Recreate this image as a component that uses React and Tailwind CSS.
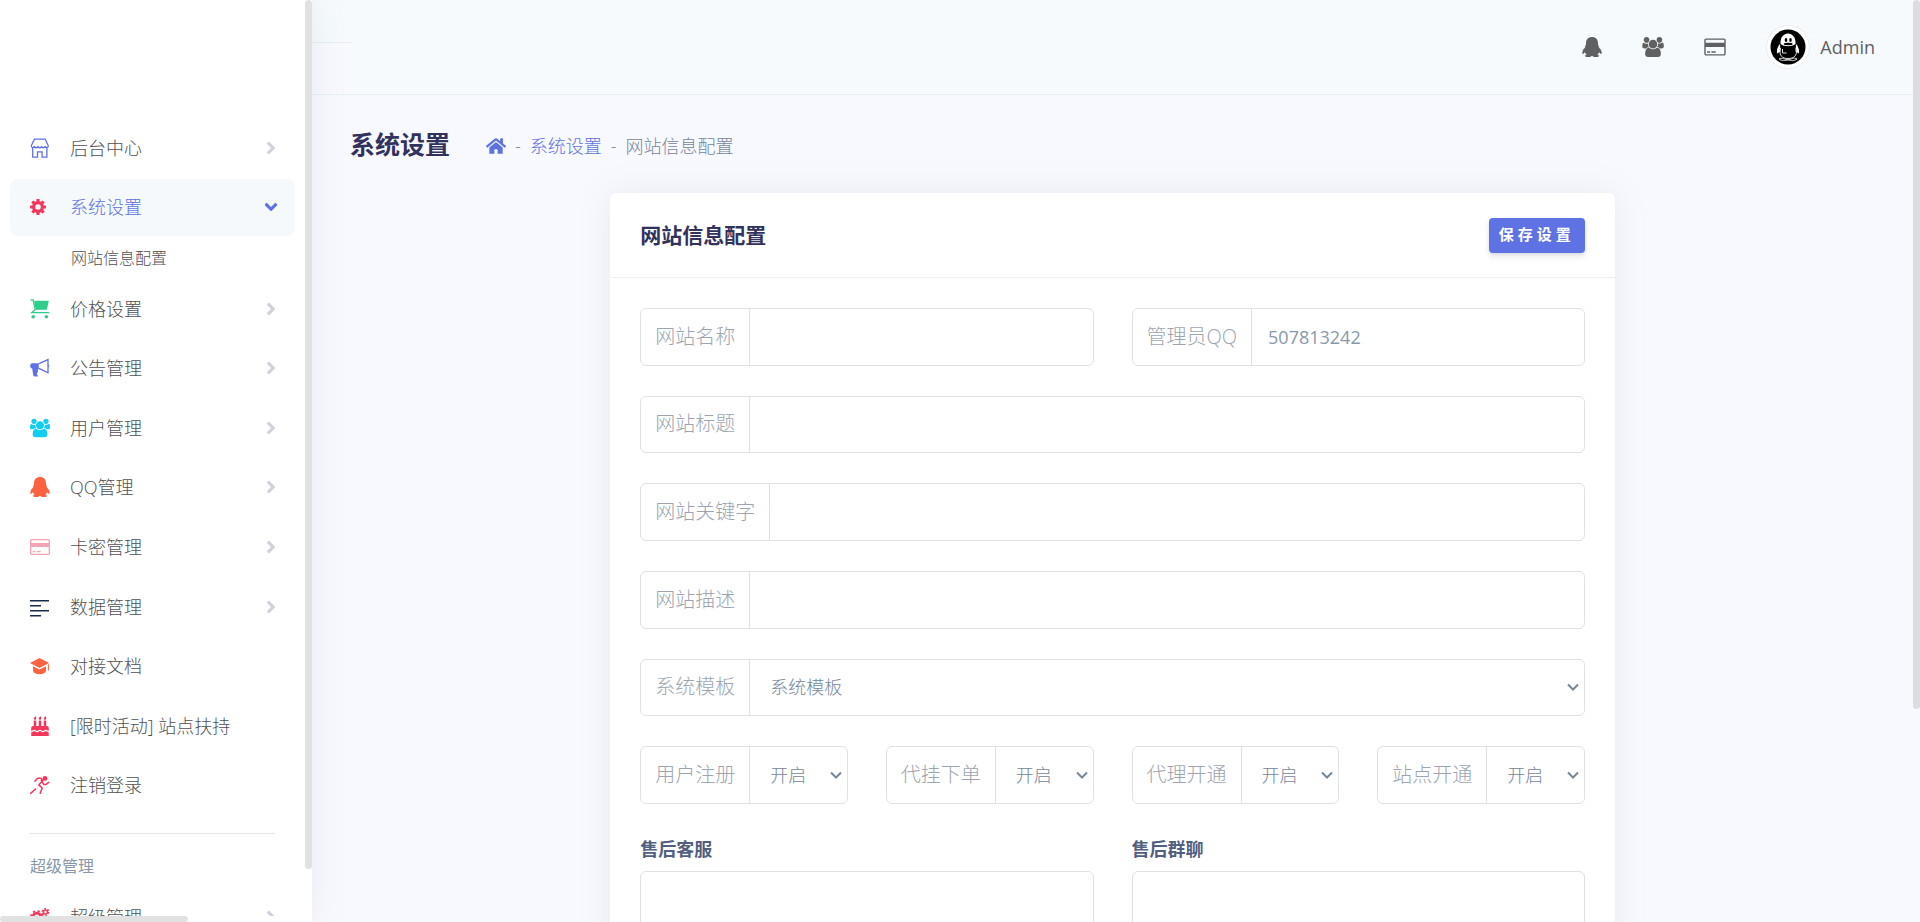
import React from "react";
import {
  FaAngleDown,
  FaAngleRight,
  FaBirthdayCake,
  FaHome,
} from "react-icons/fa";

const ShopIcon = ({ className }) => (
  <svg viewBox="0 0 20 20" fill="none" stroke="currentColor" strokeWidth="1.3" className={className}>
    <path d="M4.4 1.2h10.8l3.1 6.6c0 2.3-2.9 2.3-3.1.3-.2 2.200-3.500 2.200-3.600 0-.1 2.200-3.500 2.200-3.600 0-.1 2.200-3.400 2.200-3.600 0-.2 2-3.100 2-3.100-.3z" />
    <path d="M2.700 9.800v9.400h4.800v-5.400h4.600v5.400h4.800V9.800" />
  </svg>
);

const GearIcon = ({ className }) => (
  <svg viewBox="0 0 16 16" className={className}>
    <circle cx="8" cy="8" r="4.4" fill="none" stroke="currentColor" strokeWidth="3.2" />
    <g fill="currentColor">
      <rect x="6.4" width="3.2" height="3.4" rx="0.6" />
      <rect x="6.4" y="12.6" width="3.2" height="3.4" rx="0.6" />
      <rect y="6.4" width="3.4" height="3.2" rx="0.6" />
      <rect x="12.6" y="6.4" width="3.4" height="3.2" rx="0.6" />
      <g transform="rotate(45 8 8)">
        <rect x="6.4" width="3.2" height="3.4" rx="0.6" />
        <rect x="6.4" y="12.6" width="3.2" height="3.4" rx="0.6" />
        <rect y="6.4" width="3.4" height="3.2" rx="0.6" />
        <rect x="12.6" y="6.4" width="3.4" height="3.2" rx="0.6" />
      </g>
    </g>
  </svg>
);

const GearsIcon = ({ className }) => (
  <svg viewBox="0 0 22 20" className={className}>
    <g fill="none" stroke="currentColor">
      <circle cx="7.5" cy="10" r="4.2" strokeWidth="3" />
      <circle cx="7.5" cy="10" r="6.5" strokeWidth="2" strokeDasharray="2.6 2.5" />
      <circle cx="17" cy="4.5" r="2.2" strokeWidth="1.7" />
      <circle cx="17" cy="4.5" r="3.6" strokeWidth="1.5" strokeDasharray="1.9 1.87" />
      <circle cx="17" cy="15.5" r="2.2" strokeWidth="1.7" />
      <circle cx="17" cy="15.5" r="3.6" strokeWidth="1.5" strokeDasharray="1.9 1.87" />
    </g>
  </svg>
);

const CartIcon = ({ className }) => (
  <svg viewBox="0 0 20 20" fill="currentColor" className={className}>
    <path d="M4.2 1.8h14.6l-2 8.9H5.6z" />
    <path d="M.5.9h2.6l2.2 9.6-3.6 3.2h17.6" fill="none" stroke="currentColor" strokeWidth="1.3" />
    <circle cx="3.2" cy="17.7" r="1.8" />
    <circle cx="16.4" cy="17.7" r="1.8" />
  </svg>
);

const MegaphoneIcon = ({ className }) => (
  <svg viewBox="0 0 20 20" fill="currentColor" className={className}>
    <path d="M8.8 5.2H2.2C.8 5.2.2 6.2.2 7.8s.6 2.6 2 2.6l1 6.6c.2 1 .8 1.4 1.6 1.4h2.6c.6 0 .6-.7.2-1.1-.9-1-.9-2 0-2.9.6-.6.2-1.6.2-2.6l1-.9z" />
    <path d="M9 5.6l9-4v13.2l-9-4.4" fill="none" stroke="currentColor" strokeWidth="1.3" />
    <path d="M18.4 6.6c1.2.1 1.2 3 0 3.1z" />
  </svg>
);

const QqIcon = ({ className }) => (
  <svg viewBox="0 0 20 20" fill="currentColor" className={className}>
    <path d="M10 0C6.200 0 4 2.600 4 6v1.600c-.5.6-.9 1.500-.7 2.400C1.600 11.800.3 13.900.3 15.600c0 1 .3 1.400.7 1.300.6-.1 1.300-.9 1.900-1.900.2 1 .8 2 1.700 2.800-.9.300-1.500.7-1.500 1.200 0 1 1.800 1 3.300 1 1.600 0 2.900-.4 3.600-1.200.7.800 2 1.200 3.600 1.200 1.500 0 3.300 0 3.300-1 0-.5-.6-.9-1.500-1.200.9-.8 1.500-1.800 1.700-2.800.6 1 1.300 1.800 1.900 1.900.4.100.7-.3.7-1.300 0-1.700-1.300-3.800-3-5.600.2-.9-.2-1.800-.7-2.400V6c0-3.400-2.200-6-6-6z" />
  </svg>
);

const UsersIcon = ({ className }) => (
  <svg viewBox="0 0 1920 1792" fill="currentColor" className={className}>
    <path d="M593 896q-162 5-265 128h-134q-82 0-138-40.500t-56-118.500q0-353 124-353 6 0 43.500 21t97.500 42.500 119 21.500q67 0 133-23-5 37-5 66 0 159 92 272zm1071 637q0 120-73 189.500t-194 69.500h-874q-121 0-194-69.500t-73-189.500q0-53 3.500-103.500t14-109 26.500-108.500 43-97.500 62-81 85.500-53.500 111.500-20q10 0 43 21.500t73 48 107 48 135 21.500 135-21.500 107-48 73-48 43-21.500q61 0 111.500 20t85.500 53.500 62 81 43 97.500 26.500 108.500 14 109 3.500 103.500zm-1024-1277q0 106-75 181t-181 75-181-75-75-181 75-181 181-75 181 75 75 181zm704 384q0 159-112.500 271.500t-271.500 112.500-271.500-112.500-112.500-271.500 112.500-271.500 271.500-112.500 271.500 112.500 112.500 271.500zm576 225q0 78-56 118.500t-138 40.500h-134q-103-123-265-128 92-113 92-272 0-29-5-66 66 23 133 23 59 0 119-21.500t97.500-42.500 43.500-21q124 0 124 353zm-128-609q0 106-75 181t-181 75-181-75-75-181 75-181 181-75 181 75 75 181z" />
  </svg>
);

const CardIcon = ({ className }) => (
  <svg viewBox="0 0 1920 1792" fill="currentColor" className={className}>
    <path d="M1760 128q66 0 113 47t47 113v1216q0 66-47 113t-113 47h-1600q-66 0-113-47t-47-113v-1216q0-66 47-113t113-47h1600zm-1600 128q-13 0-22.500 9.500t-9.500 22.500v224h1664v-224q0-13-9.500-22.500t-22.500-9.500h-1600zm1600 1280q13 0 22.500-9.500t9.500-22.500v-608h-1664v608q0 13 9.500 22.500t22.500 9.500h1600zm-1504-128v-128h256v128h-256zm384 0v-128h384v128h-384z" />
  </svg>
);

const AlignLeftIcon = ({ className }) => (
  <svg viewBox="0 0 20 20" fill="currentColor" className={className}>
    <path d="M0 3h19v1.400H0zM0 8h11v1.400H0zM0 13h19v1.400H0zM0 18h11v1.400H0z" />
  </svg>
);

const HatIcon = ({ className }) => (
  <svg viewBox="0 0 20 20" fill="currentColor" className={className}>
    <path d="M9.500 2L0 7l9.500 5L19 7z" />
    <path d="M3 10.200l6.500 3.300 6.500-3.300v4.800c-1 2.200-3.500 3.300-6.500 3.300S4 17.200 3 15z" />
    <path d="M17.900 8.300h1v6.200h-1z" />
  </svg>
);

const RunIcon = ({ className }) => (
  <svg viewBox="0 0 20 20" fill="none" stroke="currentColor" className={className}>
    <circle cx="15" cy="3.400" r="2.400" fill="currentColor" stroke="none" />
    <path
      d="M4.900 6.200l2.600-3h3.300l2 2.400-4 4.300 3.400 3.100-2 5.200M11.300 5.400l2.400 4h2.400l2.600-2M.6 18.400l5-4.400"
      strokeWidth="1.500"
      strokeLinecap="round"
      strokeLinejoin="round"
    />
  </svg>
);

const Avatar = () => (
  <svg viewBox="0 0 44 44" className="w-11 h-11" role="img" aria-label="Admin">
    <circle cx="22" cy="22" r="21.500" fill="#fff" stroke="#e9ecef" />
    <circle cx="22" cy="22" r="17.500" fill="#000" />
    <path d="M14.500 19c-1-14 16-14 15 0-4 3-11 3-15 0z" fill="#fff" />
    <path d="M14 19c-2 2-3.500 5-3 9.500l3.500-2zM30 19c2 2 3.500 5 3 9.500l-3.500-2z" fill="#fff" />
    <ellipse cx="20" cy="15" rx="1.300" ry="2" />
    <ellipse cx="24.500" cy="15" rx="1.300" ry="2" />
    <ellipse cx="22.200" cy="19" rx="4.500" ry="1.200" />
    <path
      d="M14.500 23c-2 8 2 10.500 7.500 10.500s10-2.500 8-10.500M16.500 24v4h4M13 34c3-2 6 1 9 .8s6-3 9-.8c-3 2.500-6 1.500-9 .8-3 .8-6 1.500-9-.8z"
      fill="none"
      stroke="#ddd"
      strokeWidth="1"
    />
  </svg>
);

const topLinks = [
  { label: "后台中心", icon: ShopIcon, color: "text-[#5e72e4]" },
  { label: "系统设置", icon: GearIcon, color: "text-[#f5365c]", active: true },
];

const navLinks = [
  { label: "价格设置", icon: CartIcon, color: "text-[#2dce89]" },
  { label: "公告管理", icon: MegaphoneIcon, color: "text-[#5e72e4]" },
  { label: "用户管理", icon: UsersIcon, color: "text-[#11cdef]" },
  { label: "QQ管理", icon: QqIcon, color: "text-[#fb6340]" },
  { label: "卡密管理", icon: CardIcon, color: "text-[#f3a4b5]" },
  { label: "数据管理", icon: AlignLeftIcon, color: "text-[#172b4d]" },
  { label: "对接文档", icon: HatIcon, color: "text-[#fb6340]", leaf: true },
  { label: "[限时活动] 站点扶持", icon: FaBirthdayCake, color: "text-[#f5365c]", leaf: true },
  { label: "注销登录", icon: RunIcon, color: "text-[#f5365c]", leaf: true },
];

const switches = ["用户注册", "代挂下单", "代理开通", "站点开通"];

function NavItem({ item }) {
  const Icon = item.icon;
  return (
    <li className="flex items-center pl-[10px] pr-[17px]">
      <a
        href="#"
        className={`flex items-center w-full h-[57px] pl-5 pr-[14px] rounded-lg ${
          item.active ? "bg-[#f6f9fc] text-[#5e72e4]" : "text-[#505153]"
        }`}
      >
        <span className={`flex w-10 ${item.color}`}>
          <Icon className={item.active ? "w-4 h-4" : "w-5 h-5"} />
        </span>
        <span className="flex-1 whitespace-nowrap">{item.label}</span>
        {item.active && <FaAngleDown className="w-5 h-5" />}
        {!item.active && !item.leaf && (
          <FaAngleRight className="w-5 h-5 text-[#ced4da]" />
        )}
      </a>
    </li>
  );
}

function Field({ id, label, value = "" }) {
  return (
    <div className="flex min-w-0 border border-[#dee2e6] rounded-md">
      <label
        htmlFor={id}
        className="flex items-center px-[14px] border-r border-[#dee2e6] text-xl text-[#9ca5af] whitespace-nowrap"
      >
        {label}
      </label>
      <input
        id={id}
        type="text"
        defaultValue={value}
        className="flex-1 min-w-0 px-4 font-normal text-[#8898aa] rounded-md outline-none"
      />
    </div>
  );
}

function SelectField({ id, label, options }) {
  return (
    <div className="flex min-w-0 border border-[#dee2e6] rounded-md">
      <label
        htmlFor={id}
        className="flex items-center px-[14px] border-r border-[#dee2e6] text-xl text-[#9ca5af] whitespace-nowrap"
      >
        {label}
      </label>
      <div className="relative flex flex-1 min-w-0 text-[#75869a]">
        <select
          id={id}
          className="flex-1 min-w-0 pl-5 pr-6 appearance-none bg-transparent outline-none"
        >
          {options.map((option) => (
            <option key={option}>{option}</option>
          ))}
        </select>
        <svg
          viewBox="0 0 12 8"
          fill="none"
          stroke="currentColor"
          strokeWidth="2"
          className="absolute right-[5px] top-1/2 -translate-y-1/2 w-3 h-2 pointer-events-none"
        >
          <path d="M1 1.500l5 5 5-5" />
        </svg>
      </div>
    </div>
  );
}

function Sidebar() {
  return (
    <aside className="relative w-[312px] h-full overflow-hidden bg-white">
      <nav className="pt-[118px]">
        <ul className="grid auto-rows-fr h-[119px]">
          {topLinks.map((item) => (
            <NavItem key={item.label} item={item} />
          ))}
        </ul>
        <a href="#" className="flex items-center h-[42px] pl-[71px] text-base text-[#505153]">
          网站信息配置
        </a>
        <ul className="grid auto-rows-fr h-[536px]">
          {navLinks.map((item) => (
            <NavItem key={item.label} item={item} />
          ))}
        </ul>
        <hr className="mt-[18px] ml-[30px] mr-[37px] border-[#e5e5e5]" />
        <h6 className="pt-5 pb-[10px] pl-[30px] text-base leading-6 font-normal text-[#8898aa]">
          超级管理
        </h6>
        <ul>
          <NavItem item={{ label: "超级管理", icon: GearsIcon, color: "text-[#f5365c]" }} />
        </ul>
      </nav>
      <div className="absolute top-0 right-0 w-[7px] h-[869px] rounded-full bg-[#e1e1e1]"></div>
      <div className="absolute bottom-0 left-0 w-full h-[6px] bg-white">
        <div className="w-[188px] h-full rounded-full bg-[#e1e1e1]"></div>
      </div>
    </aside>
  );
}

function Header() {
  return (
    <header className="flex h-[95px] border-b border-[#e9eef3]">
      <div className="w-10 h-[43px] bg-[#f6fafd] border-b border-[#e9eef3]"></div>
      <div className="flex flex-1 items-center justify-end pr-[38px] bg-[#f6fafd] text-[#5f6062]">
        <a href="#" aria-label="QQ" className="mr-10">
          <QqIcon className="w-5 h-5" />
        </a>
        <a href="#" aria-label="用户管理" className="mr-10">
          <UsersIcon className="w-[22px] h-5" />
        </a>
        <a href="#" aria-label="卡密管理" className="mr-10">
          <CardIcon className="w-[22px] h-5" />
        </a>
        <a href="#" className="flex items-center gap-[10px] font-normal">
          <Avatar />
          Admin
        </a>
      </div>
    </header>
  );
}

export default function App() {
  return (
    <div className="flex h-screen overflow-hidden bg-[#f8f9fe] text-lg font-light font-['Open_Sans','Noto_Sans_CJK_SC',sans-serif]">
      <div className="relative z-10 shrink-0 shadow-[0_0_32px_rgba(136,152,170,0.15)]">
        <Sidebar />
      </div>
      <main className="flex-1 min-w-0">
        <Header />
        <div className="flex items-center h-[98px] px-[38px]">
          <h1 className="text-[25px] font-semibold text-[#32325d]">系统设置</h1>
          <nav className="flex items-center gap-[9px] pt-1 ml-9 text-[#75869a]">
            <a href="#" aria-label="首页" className="text-[#5e72e4]">
              <FaHome className="w-5 h-5" />
            </a>
            <span>-</span>
            <a href="#" className="text-[#5e72e4]">系统设置</a>
            <span>-</span>
            <span>网站信息配置</span>
          </nav>
        </div>
        <div className="flex justify-center px-[17px]">
          <div className="w-2/3 px-5">
            <form className="rounded-md bg-white shadow-[0_0_32px_rgba(136,152,170,0.15)]">
              <div className="flex items-center justify-between h-[85px] px-[30px] border-b border-[#edeff2]">
                <h2 className="text-[21px] font-semibold text-[#32325d]">网站信息配置</h2>
                <button
                  type="button"
                  className="h-[35px] px-[10px] rounded bg-[#5e72e4] text-[15px] font-bold tracking-[4px] text-white shadow-[0_4px_6px_rgba(50,50,93,0.11),0_1px_3px_rgba(0,0,0,0.08)]"
                >
                  保存设置
                </button>
              </div>
              <div className="p-[30px]">
                <div className="grid auto-rows-fr gap-[30px] h-[496px]">
                  <div className="grid grid-cols-2 gap-[38px]">
                    <Field id="name" label="网站名称" />
                    <Field id="qq" label="管理员QQ" value="507813242" />
                  </div>
                  <Field id="title" label="网站标题" />
                  <Field id="keywords" label="网站关键字" />
                  <Field id="description" label="网站描述" />
                  <SelectField id="template" label="系统模板" options={["系统模板"]} />
                  <div className="grid grid-cols-4 gap-[38px]">
                    {switches.map((label) => (
                      <SelectField key={label} id={label} label={label} options={["开启", "关闭"]} />
                    ))}
                  </div>
                </div>
                <div className="grid grid-cols-2 gap-[38px] pt-[31px] font-semibold text-[#525f7f]">
                  <div>
                    <label htmlFor="service" className="block mb-2">售后客服</label>
                    <textarea
                      id="service"
                      rows="5"
                      className="block w-full border border-[#dee2e6] rounded-md outline-none resize-none"
                    ></textarea>
                  </div>
                  <div>
                    <label htmlFor="group" className="block mb-2">售后群聊</label>
                    <textarea
                      id="group"
                      rows="5"
                      className="block w-full border border-[#dee2e6] rounded-md outline-none resize-none"
                    ></textarea>
                  </div>
                </div>
              </div>
            </form>
          </div>
        </div>
      </main>
      <div className="shrink-0 w-[7px] h-[709px] rounded-full bg-[#dcdce1]"></div>
    </div>
  );
}
